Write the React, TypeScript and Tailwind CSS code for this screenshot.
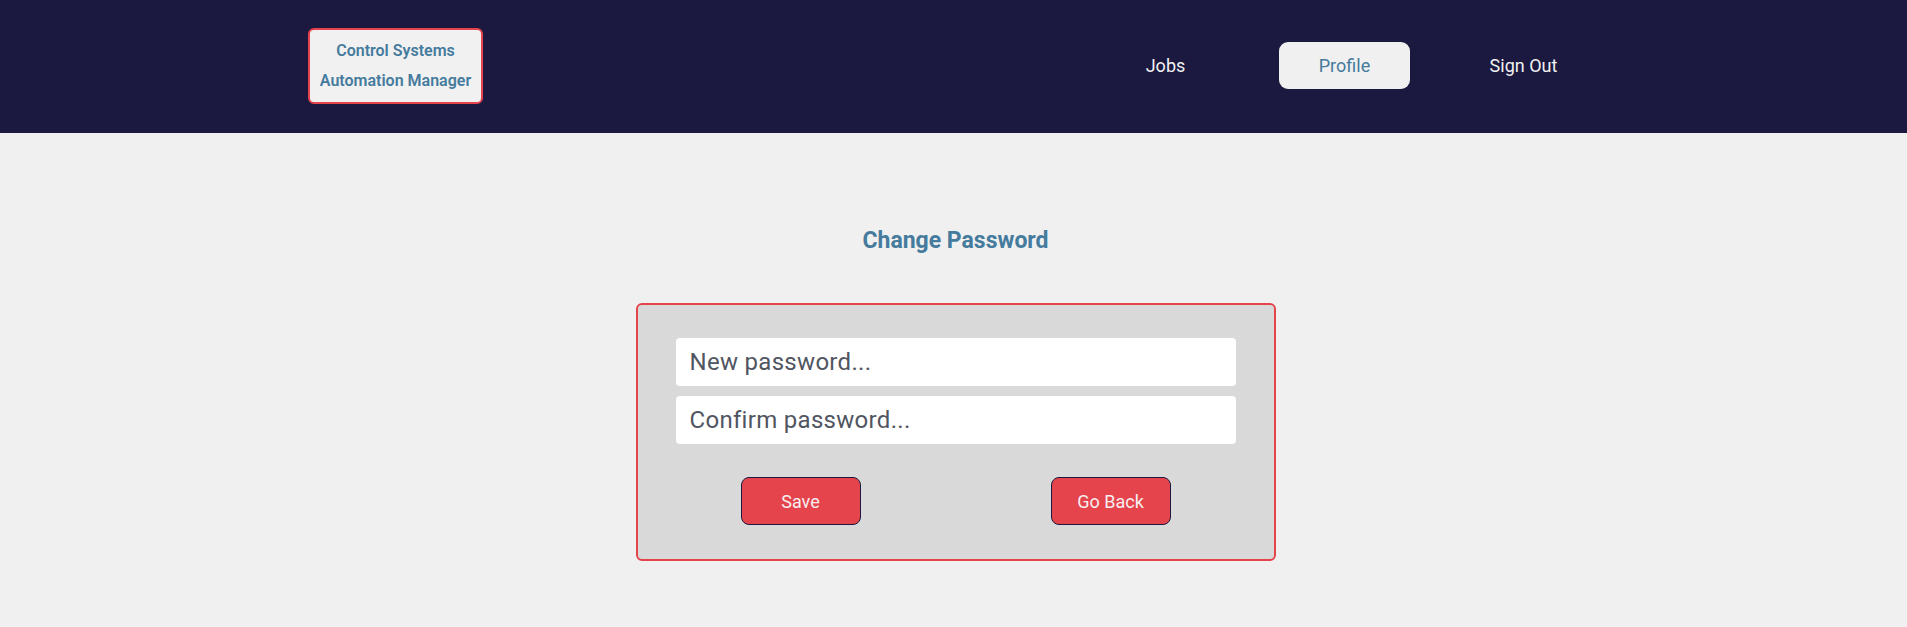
import React from "react";

export default function App() {
  return (
    <div
      className="min-h-screen w-full bg-[#f0f0f0]"
      style={{ fontFamily: "Roboto, 'Liberation Sans', sans-serif" }}
    >
      <header className="flex h-[133px] items-center bg-[#1b1940] pb-[2px]">
        <div className="ml-[308px] flex h-[76px] w-[175px] flex-col items-center justify-center rounded-[6px] border-2 border-[#e5444c] bg-[#f1f1f1] text-[16px] font-semibold leading-[30px] text-[#457b9d]">
          <span>Control Systems</span>
          <span>Automation Manager</span>
        </div>
        <nav className="ml-auto mr-[318px] flex items-center gap-[48px] text-[18px]">
          <a className="flex h-[47px] w-[131px] items-center justify-center text-[#f1f1f1]">Jobs</a>
          <a className="flex h-[47px] w-[131px] items-center justify-center rounded-[9px] bg-[#f0f0f0] text-[#457b9d]">
            Profile
          </a>
          <a className="flex h-[47px] w-[131px] items-center justify-center text-[#f1f1f1]">Sign Out</a>
        </nav>
      </header>

      <main className="flex flex-col items-center pl-[4px]">
        <h1 className="mt-[94px] text-[23px] font-bold leading-[28px] text-[#457b9d]">Change Password</h1>
        <div className="mt-[48px] flex w-[640px] flex-col rounded-[6px] border-2 border-[#e5444c] bg-[#d9d9d9] px-[38px] pb-[34px] pt-[33px]">
          <div className="flex flex-col gap-[10px]">
            <input
              type="password"
              placeholder="New password..."
              className="h-[48px] w-full rounded-[4px] bg-white px-[14px] text-[24px] tracking-[0.3px] text-[#444] outline-none placeholder:text-[#515561]"
            />
            <input
              type="password"
              placeholder="Confirm password..."
              className="h-[48px] w-full rounded-[4px] bg-white px-[14px] text-[24px] tracking-[0.3px] text-[#444] outline-none placeholder:text-[#515561]"
            />
          </div>
          <div className="mt-[33px] flex justify-center gap-[190px]">
            <button className="h-[48px] w-[120px] rounded-[8px] border border-[#1b1940] bg-[#e5444c] text-[18px] text-[#f7eef0]">
              Save
            </button>
            <button className="h-[48px] w-[120px] rounded-[8px] border border-[#1b1940] bg-[#e5444c] text-[18px] text-[#f7eef0]">
              Go Back
            </button>
          </div>
        </div>
      </main>
    </div>
  );
}
